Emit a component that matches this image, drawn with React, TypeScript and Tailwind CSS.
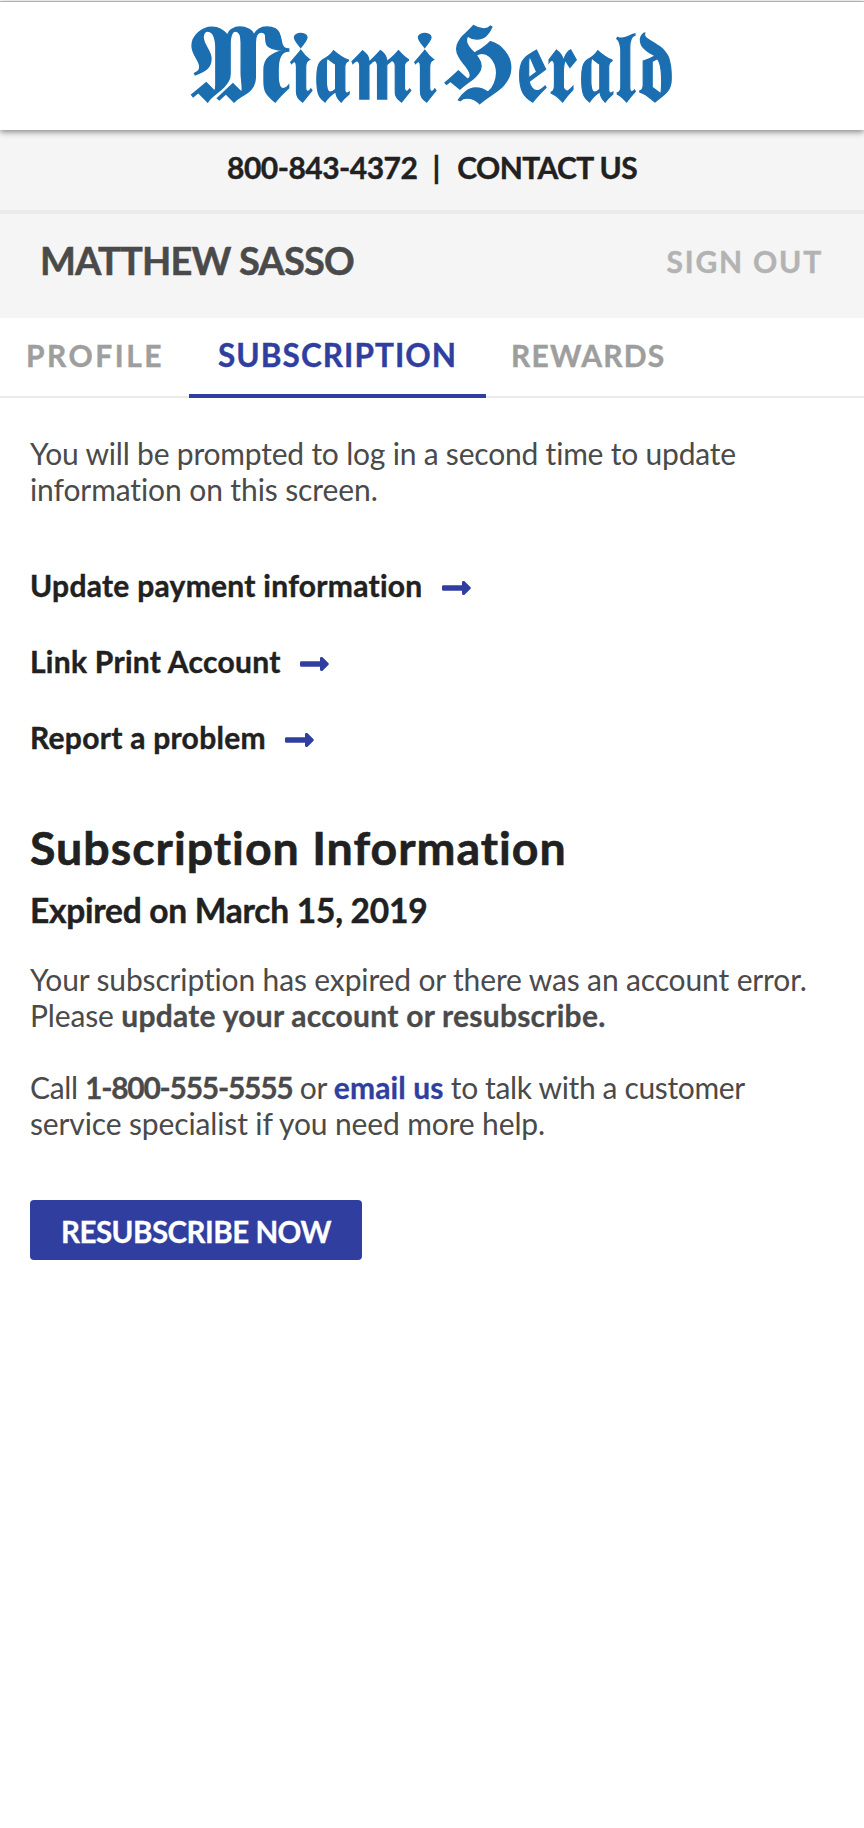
import type { ReactNode } from "react";

function Wordmark() {
  return (
    <svg
      viewBox="0 0 484 100"
      className="h-[100px] w-[484px] overflow-visible fill-[#1b6eb0] stroke-[#1b6eb0] font-['Liberation_Serif',serif] text-[99px]"
      strokeWidth="1.4"
      role="img"
      aria-label="Miami Herald"
    >
      <text x="0" y="80" textLength="101" lengthAdjust="spacingAndGlyphs" className="text-[107px]">𝕸</text>
      <text x="99" y="81" textLength="147" lengthAdjust="spacingAndGlyphs">𝖎𝖆𝖒𝖎</text>
      <text x="252" y="69" textLength="73" lengthAdjust="spacingAndGlyphs" className="text-[92px]">𝕳</text>
      <text x="326" y="81" textLength="159" lengthAdjust="spacingAndGlyphs">𝖊𝖗𝖆𝖑𝖉</text>
    </svg>
  );
}

function Arrow() {
  return (
    <svg viewBox="0 0 29 14" className="mt-1.5 h-[14px] w-[29px] fill-[#303f9f]" aria-hidden="true">
      <path d="M1.5 4.2H20V1.4Q20 0 21.2 0H22.3L28.6 6.2Q29 7 28.6 7.8L22.3 14H21.2Q20 14 20 12.6V9.8H1.5Q0 9.8 0 8.4V5.6Q0 4.2 1.5 4.2Z" />
    </svg>
  );
}

function ActionLink({ children }: { children: ReactNode }) {
  return (
    <a
      href="#"
      className="flex items-center gap-[19px] self-start text-[30px] leading-9 font-bold tracking-[0.28px] text-[#212121] [-webkit-text-stroke:0.4px]"
    >
      <span>{children}</span>
      <Arrow />
    </a>
  );
}

export default function App() {
  return (
    <div className="flex min-h-[1828px] w-[864px] flex-col bg-white font-['Lato',sans-serif] text-[#4a4a4a]">
      <header className="relative z-10 mt-px flex h-[129px] justify-center border-t border-[#b2b2b2] bg-white pt-[18px] shadow-[0_2px_6px_rgba(0,0,0,0.45)]">
        <Wordmark />
      </header>

      <div className="flex h-[84px] justify-center border-b-4 border-[#eaeaea] bg-[#f5f5f5] pt-[19px] text-[30px] leading-9 font-bold text-[#212121] [-webkit-text-stroke:0.4px]">
        <span className="mr-[15px] tracking-[-0.5px]">800-843-4372</span>
        <span>|</span>
        <a href="#" className="ml-[17px] tracking-[-0.6px]">CONTACT US</a>
      </div>

      <div className="flex h-[104px] justify-between bg-[#f5f5f5] pr-[41px] pl-10">
        <h1 className="pt-[26px] text-[38px] leading-10 font-bold tracking-[-0.8px] [-webkit-text-stroke:0.5px]">MATTHEW SASSO</h1>
        <a href="#" className="pt-[29px] text-[30px] leading-9 font-bold tracking-[1.8px] text-[#b3b3b3] [-webkit-text-stroke:0.4px]">
          SIGN OUT
        </a>
      </div>

      <nav className="flex h-20 text-[30px] leading-9 font-bold text-[#9e9e9e] [-webkit-text-stroke:0.4px]">
        <a href="#" className="w-[189px] border-b-2 border-[#ebebeb] pt-[19px] pl-[26px] tracking-[2.5px]">PROFILE</a>
        <a
          href="#"
          className="w-[297px] border-b-4 border-[#303f9f] pt-[19px] pl-[29px] text-[31.5px] tracking-[1.05px] text-[#303f9f]"
        >
          SUBSCRIPTION
        </a>
        <a href="#" className="flex-1 border-b-2 border-[#ebebeb] pt-[19px] pl-[25px] tracking-[1.2px]">REWARDS</a>
      </nav>

      <main className="flex flex-col px-[30px] pt-[37px]">
        <p className="text-[30px] leading-9 tracking-[-0.2px]">
          You will be prompted to log in a second time to update
          <br />
          <span className="tracking-[-0.1px]">information on this screen.</span>
        </p>

        <div className="mt-[60px] flex flex-col gap-10">
          <ActionLink>Update payment information</ActionLink>
          <ActionLink>Link Print Account</ActionLink>
          <ActionLink>Report a problem</ActionLink>
        </div>

        <h2 className="mt-16 text-[46.5px] leading-14 font-bold tracking-[1px] text-[#212121] [-webkit-text-stroke:0.6px]">
          Subscription Information
        </h2>
        <h3 className="mt-[15px] text-[33.5px] leading-10 font-bold tracking-[-0.25px] text-[#212121] [-webkit-text-stroke:0.4px]">
          Expired on March 15, 2019
        </h3>

        <p className="mt-[31px] text-[30px] leading-9 tracking-[-0.14px]">
          Your subscription has expired or there was an account error.
          <br />
          Please{" "}
          <strong className="tracking-[0.25px] [-webkit-text-stroke:0.3px]">update your account or resubscribe.</strong>
        </p>
        <p className="mt-9 text-[30px] leading-9 tracking-[-0.35px]">
          Call <strong className="tracking-[-1.25px] [-webkit-text-stroke:0.3px]">1-800-555-5555</strong> or{" "}
          <a href="#" className="font-bold tracking-[0.1px] text-[#303f9f] [-webkit-text-stroke:0.3px]">email us</a> to talk
          with a customer
          <br />
          <span className="tracking-[-0.13px]">service specialist if you need more help.</span>
        </p>

        <button className="mt-[59px] flex h-[60px] w-[332px] justify-center self-start rounded-[4px] bg-[#303f9f] pt-[14px] text-[29.5px] leading-9 font-bold tracking-[-0.5px] text-white [-webkit-text-stroke:0.3px]">
          RESUBSCRIBE NOW
        </button>
      </main>
    </div>
  );
}
